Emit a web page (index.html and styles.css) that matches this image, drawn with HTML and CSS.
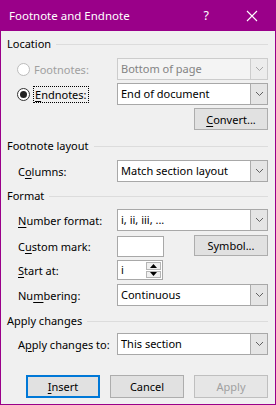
FILE: index.html
```html
<!DOCTYPE html>
<html lang="en">
<head>
    <meta charset="UTF-8">
    <title>Footnote and Endnote</title>
    <link rel="stylesheet" href="styles.css">
</head>
<body>

   <div class="dialog">
    <div class="titlebar">
        <span class="title">Footnote and Endnote</span>
        <span class="help">?</span>
        <svg class="close" width="12" height="12" viewBox="0 0 12 12">
            <path d="M1 1 L11 11 M11 1 L1 11" stroke="#fff" stroke-width="1.1" fill="none"/>
        </svg>
    </div>

    <div class="content">
        <div class="group-head">Location</div>

        <div class="row">
            <label class="radio-label disabled">
                <span class="radio dim"></span>
                <span>Footnotes:</span>
            </label>
            <div class="select disabled">
                <span class="value">Bottom of page</span>
                <span class="arrow"><svg width="9" height="6" viewBox="0 0 9 6"><path d="M1 1 L4.5 4.5 L8 1" stroke="#a6a6a6" fill="none"/></svg></span>
            </div>
        </div>

        <div class="row gap3">
            <label class="radio-label">
                <span class="radio checked"></span>
                <span class="focus"><u>E</u>ndnotes:</span>
            </label>
            <div class="select">
                <span class="value">End of document</span>
                <span class="arrow"><svg width="9" height="6" viewBox="0 0 9 6"><path d="M1 1 L4.5 4.5 L8 1" stroke="#606060" fill="none"/></svg></span>
            </div>
        </div>

        <div class="row gap3 right">
            <button class="btn"><u>C</u>onvert...</button>
        </div>

        <div class="group-head head2">Footnote layout</div>

        <div class="row gap6">
            <span class="label">C<u>o</u>lumns:</span>
            <div class="select">
                <span class="value">Match section layout</span>
                <span class="arrow"><svg width="9" height="6" viewBox="0 0 9 6"><path d="M1 1 L4.5 4.5 L8 1" stroke="#606060" fill="none"/></svg></span>
            </div>
        </div>

        <div class="group-head head3">Format</div>

        <div class="row gap5">
            <span class="label"><u>N</u>umber format:</span>
            <div class="select">
                <span class="value">i, ii, iii, ...</span>
                <span class="arrow"><svg width="9" height="6" viewBox="0 0 9 6"><path d="M1 1 L4.5 4.5 L8 1" stroke="#606060" fill="none"/></svg></span>
            </div>
        </div>

        <div class="row gap4">
            <span class="label">C<u>u</u>stom mark:</span>
            <div class="textbox"></div>
            <button class="btn symbol">Symbol...</button>
        </div>

        <div class="row gap3 short">
            <span class="label"><u>S</u>tart at:</span>
            <div class="spinner">
                <span class="value">i</span>
                <span class="spin">
                    <span class="spin-btn"><svg width="7" height="4" viewBox="0 0 7 4"><path d="M0 4 L3.5 0 L7 4Z" fill="#000"/></svg></span>
                    <span class="spin-btn"><svg width="7" height="4" viewBox="0 0 7 4"><path d="M0 0 L3.5 4 L7 0Z" fill="#000"/></svg></span>
                </span>
            </div>
        </div>

        <div class="row gap4">
            <span class="label">Nu<u>m</u>bering:</span>
            <div class="select">
                <span class="value">Continuous</span>
                <span class="arrow"><svg width="9" height="6" viewBox="0 0 9 6"><path d="M1 1 L4.5 4.5 L8 1" stroke="#606060" fill="none"/></svg></span>
            </div>
        </div>

        <div class="group-head head4">Apply changes</div>

        <div class="row gap4">
            <span class="label">A<u>p</u>ply changes to:</span>
            <div class="select">
                <span class="value">This section</span>
                <span class="arrow"><svg width="9" height="6" viewBox="0 0 9 6"><path d="M1 1 L4.5 4.5 L8 1" stroke="#606060" fill="none"/></svg></span>
            </div>
        </div>

        <div class="buttons">
            <button class="btn default"><u>I</u>nsert</button>
            <button class="btn cancel">Cancel</button>
            <button class="btn btn-disabled">Apply</button>
        </div>
    </div>
   </div>

</body>
</html>
```

FILE: styles.css
```css
*{
    margin: 0;
    padding: 0;
    box-sizing: border-box;
}
body{
    width: 276px;
    height: 405px;
    font-family: "Noto Sans", "Open Sans", sans-serif;
    font-size: 11px;
    color: #000;
    background: #f0f0f0;
}
u{
    text-decoration: underline;
    text-underline-offset: 2px;
}
.dialog{
    width: 276px;
    height: 405px;
    border: 1px solid #9a0089;
    border-top: none;
    background: #f0f0f0;
}
.titlebar{
    height: 31px;
    margin: 0 -1px;
    background: #9a0089;
    color: #fff;
    display: flex;
    align-items: center;
    padding-left: 9px;
}
.title{
    flex: 1;
    font-size: 11.5px;
    padding-bottom: 1px;
}
.help{
    font-size: 12.5px;
    margin-right: 37px;
}
.close{
    margin-right: 18px;
}
.content{
    padding: 0 7px 0 6px;
}
.group-head{
    display: flex;
    align-items: center;
    height: 16px;
    line-height: 16px;
    margin-top: 5px;
}
.group-head::after{
    content: "";
    flex: 1;
    height: 1px;
    background: #dcdcdc;
    margin-left: 5px;
}
.head2{ margin-top: 8px; }
.head3{ margin-top: 6px; }
.head4{ margin-top: 7px; }

.row{
    display: flex;
    align-items: center;
    height: 22px;
    margin-top: 6px;
    padding-left: 10px;
}
.gap3{ margin-top: 3px; }
.gap4{ margin-top: 4px; }
.gap5{ margin-top: 5px; }
.gap6{ margin-top: 6px; }
.right{ justify-content: flex-end; }
.short{ height: 20px; }

.label, .radio-label{
    width: 100px;
    flex: none;
}
.label{
    padding-left: 1px;
}
.radio-label{
    display: flex;
    align-items: center;
}
.radio-label.disabled{
    color: #a0a0a0;
}
.radio{
    width: 13px;
    height: 13px;
    border-radius: 50%;
    border: 1px solid #333;
    background: #fff;
    margin-right: 4px;
    display: flex;
    align-items: center;
    justify-content: center;
}
.radio.dim{
    border-color: #bcbcbc;
}
.radio.checked::after{
    content: "";
    width: 7px;
    height: 7px;
    border-radius: 50%;
    background: #222;
}
.focus{
    outline: 1px dotted #000;
    outline-offset: 0;
    padding: 0 1px;
    line-height: 15px;
}

.select{
    flex: 1;
    height: 22px;
    display: flex;
    border: 1px solid #a8a8a8;
    background: #fff;
}
.select .value{
    flex: 1;
    padding-left: 3px;
    line-height: 19px;
}
.select .arrow{
    width: 17px;
    border-left: 1px solid #acacac;
    background: #e5e5e5;
    display: flex;
    align-items: center;
    justify-content: center;
}
.select.disabled{
    background: #f4f4f4;
    border-color: #cccccc;
    color: #838383;
}
.select.disabled .arrow{
    background: #ececec;
    border-left-color: #cccccc;
}

.btn{
    font: inherit;
    color: #000;
    width: 74px;
    height: 22px;
    background: #e1e1e1;
    border: 1px solid #adadad;
}
.symbol{
    margin-left: auto;
    margin-top: -2px;
    height: 21px;
}
.textbox{
    width: 47px;
    height: 21px;
    border: 1px solid #a8a8a8;
    background: #fff;
}
.spinner{
    width: 46px;
    height: 20px;
    border: 1px solid #a8a8a8;
    background: #fff;
    display: flex;
}
.spinner .value{
    flex: 1;
    padding-left: 3px;
    line-height: 18px;
}
.spin{
    width: 16px;
    display: flex;
    flex-direction: column;
    padding: 1px 1px 1px 0;
    gap: 1px;
}
.spin-btn{
    flex: 1;
    background: #f0f0f0;
    border: 1px solid #b5b5b5;
    display: flex;
    align-items: center;
    justify-content: center;
}

.buttons{
    display: flex;
    margin-top: 20px;
    padding-left: 19px;
}
.buttons .btn{
    height: 23px;
}
.default{
    border: 2px solid #0078d7;
}
.cancel{
    margin-left: 10px;
}
.btn-disabled{
    margin-left: auto;
    color: #a0a0a0;
    border-color: #bfbfbf;
    background: #e6e6e6;
}
```
